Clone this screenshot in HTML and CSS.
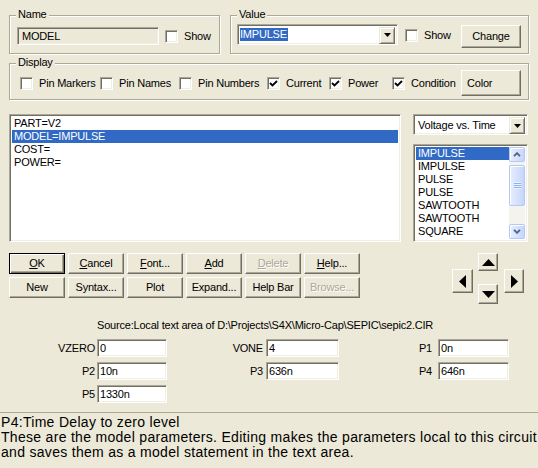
FILE: index.html
```html
<!DOCTYPE html>
<html>
<head>
<meta charset="utf-8">
<link rel="stylesheet" href="styles.css">
</head>
<body>
<div class="dlg">
  <div class="top-row">
    <div class="group g-name">
      <span class="legend">Name</span>
      <div class="field disabled name-field">MODEL</div>
      <div class="chk chk-show"><span class="box"></span><span>Show</span></div>
    </div>
    <div class="group g-value">
      <span class="legend">Value</span>
      <div class="combo value-combo">
        <div class="combo-text"><span class="sel">IMPULSE</span></div>
        <div class="combo-btn"><svg width="7" height="4" viewBox="0 0 7 4"><path d="M0 0h7L3.5 4z" fill="#000"/></svg></div>
      </div>
      <div class="chk chk-vshow"><span class="box"></span><span>Show</span></div>
      <div class="btn change-btn">Change</div>
    </div>
  </div>

  <div class="group g-display">
    <span class="legend">Display</span>
    <div class="chk w1"><span class="box"></span><span>Pin Markers</span></div>
    <div class="chk w2"><span class="box"></span><span>Pin Names</span></div>
    <div class="chk w3"><span class="box"></span><span>Pin Numbers</span></div>
    <div class="chk w4"><span class="box"><svg width="9" height="9" viewBox="0 0 9 9"><path d="M1 4l2.5 2.5L8 2" fill="none" stroke="#000" stroke-width="1.8"/></svg></span><span>Current</span></div>
    <div class="chk w5"><span class="box"><svg width="9" height="9" viewBox="0 0 9 9"><path d="M1 4l2.5 2.5L8 2" fill="none" stroke="#000" stroke-width="1.8"/></svg></span><span>Power</span></div>
    <div class="chk w6"><span class="box"><svg width="9" height="9" viewBox="0 0 9 9"><path d="M1 4l2.5 2.5L8 2" fill="none" stroke="#000" stroke-width="1.8"/></svg></span><span>Condition</span></div>
    <div class="btn color-btn">Color</div>
  </div>

  <div class="mid">
    <div class="sunken textlist">
      <div class="row">PART=V2</div>
      <div class="row selrow">MODEL=IMPULSE</div>
      <div class="row">COST=</div>
      <div class="row">POWER=</div>
    </div>
    <div class="rightcol">
      <div class="combo plot-combo">
        <div class="combo-text">Voltage vs. Time</div>
        <div class="combo-btn"><svg width="7" height="4" viewBox="0 0 7 4"><path d="M0 0h7L3.5 4z" fill="#000"/></svg></div>
      </div>
      <div class="sunken rlist">
        <div class="items">
          <div class="row selrow">IMPULSE</div>
          <div class="row">IMPULSE</div>
          <div class="row">PULSE</div>
          <div class="row">PULSE</div>
          <div class="row">SAWTOOTH</div>
          <div class="row">SAWTOOTH</div>
          <div class="row">SQUARE</div>
          <div class="row">SQUARE</div>
        </div>
        <div class="sb">
          <div class="sb-btn"><svg width="8" height="5" viewBox="0 0 8 5"><path d="M1 4.2L4 1.2L7 4.2" fill="none" stroke="#4D6185" stroke-width="1.8"/></svg></div>
          <div class="sb-gap1"></div>
          <div class="sb-thumb"><span class="grip"></span></div>
          <div class="sb-track"></div>
          <div class="sb-btn"><svg width="8" height="5" viewBox="0 0 8 5"><path d="M1 0.8L4 3.8L7 0.8" fill="none" stroke="#4D6185" stroke-width="1.8"/></svg></div>
        </div>
      </div>
    </div>
  </div>

  <div class="btn-area">
    <div class="btn-grid">
      <div class="btn default"><u>O</u>K</div>
      <div class="btn"><u>C</u>ancel</div>
      <div class="btn"><u>F</u>ont...</div>
      <div class="btn"><u>A</u>dd</div>
      <div class="btn dis"><u>D</u>elete</div>
      <div class="btn"><u>H</u>elp...</div>
      <div class="btn">New</div>
      <div class="btn">Syntax...</div>
      <div class="btn">Plot</div>
      <div class="btn">Expand...</div>
      <div class="btn">Help Bar</div>
      <div class="btn dis">Browse...</div>
    </div>
    <div class="dpad">
      <div class="btn d-up"><svg width="13" height="7" viewBox="0 0 13 7"><path d="M0 7L6.5 0L13 7z" fill="#000"/></svg></div>
      <div class="btn d-left"><svg width="7" height="13" viewBox="0 0 7 13"><path d="M7 0L0 6.5L7 13z" fill="#000"/></svg></div>
      <div class="btn d-right"><svg width="7" height="13" viewBox="0 0 7 13"><path d="M0 0L7 6.5L0 13z" fill="#000"/></svg></div>
      <div class="btn d-down"><svg width="13" height="7" viewBox="0 0 13 7"><path d="M0 0L6.5 7L13 0z" fill="#000"/></svg></div>
    </div>
  </div>

  <div class="source">Source:Local text area of D:\Projects\S4X\Micro-Cap\SEPIC\sepic2.CIR</div>

  <div class="params">
    <div class="plabel pa">VZERO</div><div class="field pf">0</div>
    <div class="plabel pb">VONE</div><div class="field pf">4</div>
    <div class="plabel pc">P1</div><div class="field pf">0n</div>
    <div class="plabel pa">P2</div><div class="field pf">10n</div>
    <div class="plabel pb">P3</div><div class="field pf">636n</div>
    <div class="plabel pc">P4</div><div class="field pf">646n</div>
    <div class="plabel pa">P5</div><div class="field pf">1330n</div>
  </div>

  <div class="help">
    <div>P4:Time Delay to zero level</div>
    <div>These are the model parameters. Editing makes the parameters local to this circuit</div>
    <div>and saves them as a model statement in the text area.</div>
  </div>
</div>
</body>
</html>
```

FILE: styles.css
```css
* { box-sizing: border-box; }
html, body { margin: 0; padding: 0; }
body {
  width: 538px;
  height: 468px;
  overflow: hidden;
  background: #ECE9D8;
  font-family: "Liberation Sans", Arial, sans-serif;
  font-size: 11px;
  letter-spacing: -0.2px;
  color: #000;
}
.dlg { padding-top: 15px; }

/* group boxes */
.group {
  position: relative;
  border: 1px solid #ACA899;
  box-shadow: inset 1px 1px 0 #fff, 1px 1px 0 #fff;
  display: flex;
  align-items: center;
}
.legend {
  position: absolute;
  top: -8px;
  left: 6px;
  padding: 0 2px;
  line-height: 13px;
  background: #ECE9D8;
}
.top-row {
  display: flex;
  margin-left: 9px;
  gap: 10px;
  height: 39px;
}
.g-name { width: 211px; padding: 3px 0 0 7px; }
.g-value { width: 299px; padding: 1px 7px 0 6px; }
.g-display {
  margin: 9px 0 0 9px;
  width: 520px;
  height: 37px;
  padding: 3px 7px 0 10px;
}

/* sunken fields */
.sunken, .field, .combo, .box {
  border: 1px solid;
  border-color: #ACA899 #fff #fff #ACA899;
  box-shadow: inset 1px 1px 0 #716F64, inset -1px -1px 0 #F1EFE2;
  background: #fff;
}
.field {
  height: 18px;
  line-height: 16px;
  padding-left: 3px;
}
.field.disabled { background: #ECE9D8; }
.name-field { width: 142px; height: 18px; padding-left: 4px; }

/* checkboxes */
.chk { display: flex; align-items: center; line-height: 13px; }
.box {
  width: 13px;
  height: 13px;
  margin-right: 6px;
  flex: none;
  display: flex;
  align-items: center;
  justify-content: center;
}
.box svg { display: block; }
.chk-show { margin-left: 6px; }
.chk-vshow { margin-left: 7px; }
.w1 { width: 80px; }
.w2 { width: 79px; }
.w3 { width: 88px; }
.w4 { width: 62px; }
.w5 { width: 63px; }

/* buttons */
.btn {
  border: 1px solid;
  border-color: #fff #716F64 #716F64 #fff;
  box-shadow: inset -1px -1px 0 #ACA899;
  background: #ECE9D8;
  display: flex;
  align-items: center;
  justify-content: center;
  line-height: 13px;
}
.btn.default {
  border: 1px solid #000;
  box-shadow: inset 1px 1px 0 #fff, inset -1px -1px 0 #716F64, inset -2px -2px 0 #ACA899;
}
.btn.dis { color: #ACA899; text-shadow: 1px 1px 0 #fff; }
.change-btn { margin-left: auto; width: 60px; height: 23px; margin-top: 2px; }
.color-btn { margin-left: auto; width: 60px; height: 26px; justify-content: flex-start; padding-left: 5px; }

/* combo */
.combo { display: flex; height: 21px; padding: 2px; }
.combo-text { flex: 1; line-height: 17px; white-space: nowrap; overflow: hidden; }
.combo-btn {
  width: 16px;
  height: 17px;
  border: 1px solid;
  border-color: #ECE9D8 #716F64 #716F64 #ECE9D8;
  box-shadow: inset 1px 1px 0 #fff, inset -1px -1px 0 #ACA899;
  background: #ECE9D8;
  display: flex;
  align-items: center;
  justify-content: center;
}
.combo-btn svg { display: block; }
.value-combo { width: 161px; margin-top: -2px; }
.value-combo .combo-text { padding-top: 1px; line-height: 13px; }
.sel { background: #316AC5; color: #fff; display: inline-block; padding: 0 1px 0 0; line-height: 13px; }
.plot-combo { width: 115px; }
.plot-combo .combo-text { padding-left: 2px; }

/* middle */
.mid { display: flex; margin: 14px 0 0 9px; height: 128px; }
.textlist { width: 392px; height: 128px; padding: 2px; }
.row { height: 13px; line-height: 13px; padding-left: 2px; white-space: nowrap; }
.selrow { background: #316AC5; color: #fff; }
.rightcol { margin-left: 12px; width: 115px; display: flex; flex-direction: column; }
.rlist { margin-top: 9px; height: 98px; padding: 2px; display: flex; }
.rlist .items { flex: 1; overflow: hidden; }
.sb { width: 16px; display: flex; flex-direction: column; background: #F4F3EE; }
.sb-btn, .sb-thumb {
  border: 1px solid #B4C8F6;
  border-radius: 2px;
  background: linear-gradient(to right, #E6EEFE, #C6D6FA);
  box-shadow: inset 1px 1px 0 #fff;
  display: flex;
  align-items: center;
  justify-content: center;
}
.sb-btn { height: 15px; }
.sb-btn svg { display: block; }
.sb-gap1 { height: 3px; }
.sb-thumb { height: 41px; }
.sb-track { flex: 1; }
.grip {
  width: 7px;
  height: 7px;
  background: repeating-linear-gradient(#EEF4FE 0 1px, #8CB0F8 1px 2px);
}

/* buttons area */
.btn-area { display: flex; margin-top: 11px; height: 51px; }
.btn-grid {
  margin-left: 9px;
  display: grid;
  grid-template-columns: repeat(6, 56px);
  grid-template-rows: 21px 21px;
  column-gap: 3px;
  row-gap: 3px;
}
.dpad { position: relative; margin-left: 92px; width: 72px; height: 51px; }
.dpad .btn { position: absolute; }
.d-up { left: 26px; top: 0; width: 20px; height: 18px; }
.d-down { left: 26px; top: 31px; width: 20px; height: 20px; }
.d-left { left: 0; top: 16px; width: 21px; height: 24px; }
.d-right { left: 52px; top: 16px; width: 20px; height: 24px; }
.dpad svg { display: block; }

/* source & params */
.source { margin-top: 15px; padding-left: 97px; line-height: 13px; height: 13px; white-space: nowrap; }
.params {
  margin-top: 7px;
  display: grid;
  grid-template-columns: 97px 70px 99px 73px 99px 71px;
  grid-template-rows: 18px 18px 18px;
  row-gap: 5px;
}
.plabel { text-align: right; line-height: 18px; }
.pa { padding-right: 2px; }
.pb { padding-right: 3px; }
.pc { padding-right: 6px; }
.pf { padding-left: 2px; }

/* help */
.help {
  margin-top: 9px;
  border-top: 1px solid #ACA899;
  padding: 2px 0 0 1px;
  font-size: 14px;
  line-height: 15px;
  letter-spacing: 0.3px;
  white-space: nowrap;
}
```
